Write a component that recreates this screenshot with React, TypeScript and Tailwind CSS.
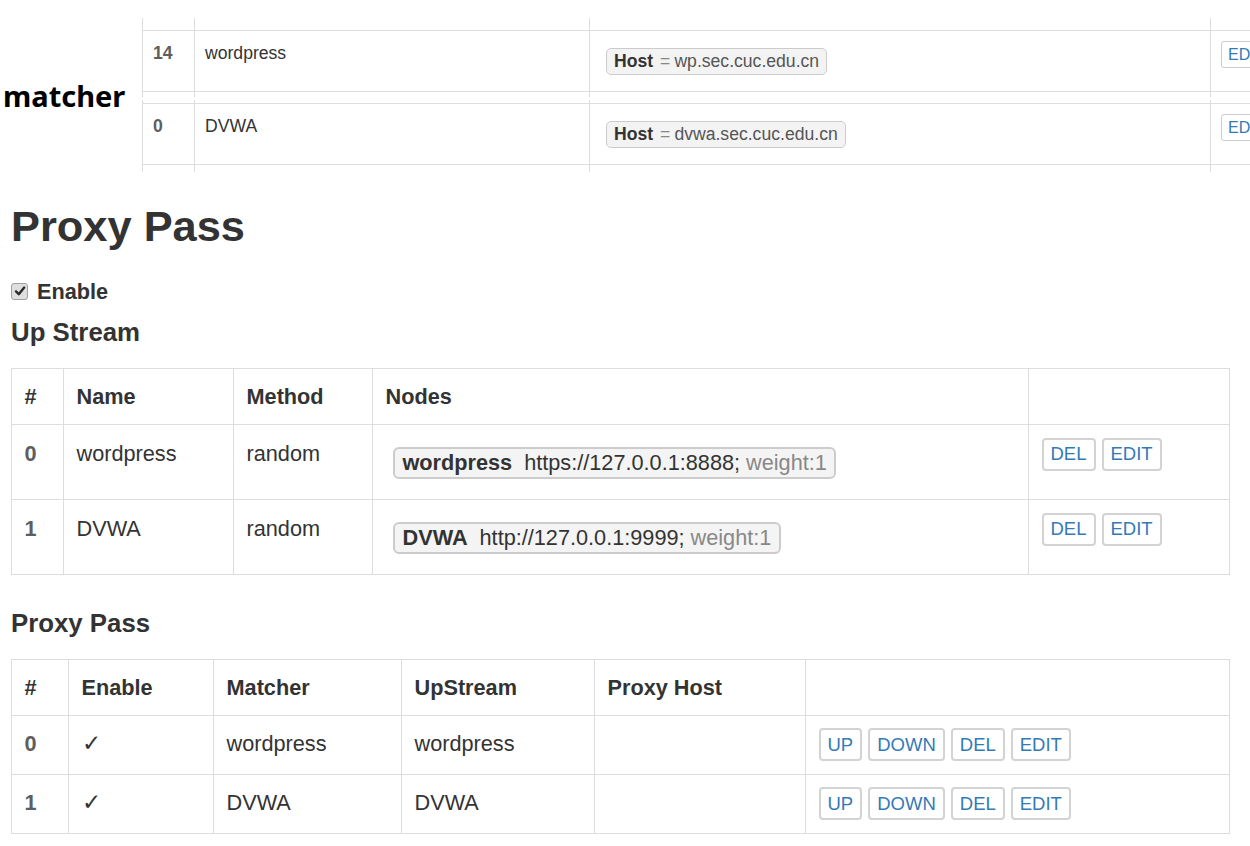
const upstreams = [
  { id: "0", name: "wordpress", method: "random", url: "https://127.0.0.1:8888;", weight: "weight:1" },
  { id: "1", name: "DVWA", method: "random", url: "http://127.0.0.1:9999;", weight: "weight:1" },
];

const passes = [
  { id: "0", matcher: "wordpress", upstream: "wordpress" },
  { id: "1", matcher: "DVWA", upstream: "DVWA" },
];

const matchers = [
  { id: "14", name: "wordpress", host: "wp.sec.cuc.edu.cn", pt: "pt-[12px]", pb: "pb-[5px]" },
  { id: "0", name: "DVWA", host: "dvwa.sec.cuc.edu.cn", pt: "pt-[3px]", pb: "pb-[7px]" },
];

function Btn({ label }: { label: string }) {
  return (
    <button className="mr-[6px] h-[33px] rounded-[4px] border-2 border-[#d3d3d3] bg-white px-[7px] text-[18.5px] leading-none text-[#337ab7]">
      {label}
    </button>
  );
}

function MatcherRow({ m }: { m: (typeof matchers)[number] }) {
  const cell = `shrink-0 border-l border-[#ddd] ${m.pt} ${m.pb}`;
  const inner = "h-[62px] border-y border-[#ddd] px-[10px] pt-[10px]";
  return (
    <div className="flex">
      <div className={`${cell} w-[52px]`}>
        <div className={`${inner} font-bold text-[#5e5e5e]`}>{m.id}</div>
      </div>
      <div className={`${cell} w-[395px]`}>
        <div className={inner}>{m.name}</div>
      </div>
      <div className={`${cell} w-[621px]`}>
        <div className={inner}>
          <span className="ml-[6px] mt-[7px] inline-flex h-[27px] items-center rounded-[5px] border border-[#ccc] bg-[#f3f3f3] px-[7px]">
            <b className="text-[#333]">Host</b>
            <span className="ml-[7px] text-[#888]">=</span>
            <span className="ml-[4px] text-[#555]">{m.host}</span>
          </span>
        </div>
      </div>
      <div className={`${cell} w-[80px]`}>
        <div className={`${inner} pt-[10px]`}>
          <span className="inline-flex h-[27px] items-center rounded-[3px] border border-[#ccc] bg-white px-[6px] text-[16px] text-[#337ab7]">
            EDIT
          </span>
        </div>
      </div>
    </div>
  );
}

export default function App() {
  const th = "border border-[#ddd] px-[12.5px] pt-[12px] text-left align-top font-bold";
  const td = "border border-[#ddd] px-[12.5px] pt-[12.5px] align-top";
  return (
    <div className="h-[846px] w-[1250px] overflow-hidden bg-white font-['Liberation_Sans',Arial,sans-serif] text-[#333]">
      <div className="mt-[18px] flex">
        <div className="flex w-[142px] shrink-0 items-center pl-[3px]">
          <h2 className="font-['Noto_Sans',sans-serif] text-[29px] leading-[37px] font-bold text-black">matcher</h2>
        </div>
        <div className="flex flex-col gap-[3px] text-[17.6px] leading-[25px]">
          {matchers.map((m) => (
            <MatcherRow key={m.id + m.name} m={m} />
          ))}
        </div>
      </div>

      <div className="pl-[11px] pr-[20px]">
        <h1 className="mt-[31px] text-[43.4px] leading-[47.7px] font-bold">Proxy Pass</h1>

        <label className="mt-[25px] flex h-[31px] items-center text-[21.7px] leading-[31px] font-bold">
          <span className="flex h-[17px] w-[17px] items-center justify-center rounded-[3px] border border-[#a0a0a0] bg-[#dedede]">
            <svg viewBox="0 0 12 12" className="h-[12px] w-[12px]">
              <path d="M2 6.4 L4.8 9.2 L10.2 2.6" fill="none" stroke="#2a2a2a" strokeWidth="2.4" strokeLinecap="round" strokeLinejoin="round" />
            </svg>
          </span>
          <span className="ml-[9px]">Enable</span>
        </label>

        <h3 className="mt-[11.6px] text-[25.8px] leading-[28.4px] font-bold">Up Stream</h3>

        <table className="mt-[21.7px] w-[1218px] table-fixed border-collapse text-[21.7px] leading-[31px]">
          <colgroup>
            <col className="w-[52px]" />
            <col className="w-[170px]" />
            <col className="w-[139px]" />
            <col className="w-[656px]" />
            <col className="w-[201px]" />
          </colgroup>
          <thead>
            <tr className="h-[56px]">
              <th className={th}>#</th>
              <th className={th}>Name</th>
              <th className={th}>Method</th>
              <th className={th}>Nodes</th>
              <th className={th}></th>
            </tr>
          </thead>
          <tbody>
            {upstreams.map((u) => (
              <tr key={u.id} className="h-[75px]">
                <td className={`${td} font-bold text-[#5e5e5e]`}>{u.id}</td>
                <td className={td}>{u.name}</td>
                <td className={td}>{u.method}</td>
                <td className={td}>
                  <span className="ml-[7.5px] mt-[9px] inline-flex h-[32px] items-center rounded-[6px] border-2 border-[#ccc] bg-[#f4f4f4] px-[7.5px]">
                    <b>{u.name}</b>
                    <span className="ml-[12px]">{u.url}</span>
                    <span className="ml-[6px] text-[#888]">{u.weight}</span>
                  </span>
                </td>
                <td className={td}>
                  <div className="flex">
                    <Btn label="DEL" />
                    <Btn label="EDIT" />
                  </div>
                </td>
              </tr>
            ))}
          </tbody>
        </table>

        <h3 className="mt-[34px] text-[25.8px] leading-[28.4px] font-bold">Proxy Pass</h3>

        <table className="mt-[21px] w-[1218px] table-fixed border-collapse text-[21.7px] leading-[31px]">
          <colgroup>
            <col className="w-[57px]" />
            <col className="w-[145px]" />
            <col className="w-[188px]" />
            <col className="w-[193px]" />
            <col className="w-[211px]" />
            <col className="w-[424px]" />
          </colgroup>
          <thead>
            <tr className="h-[56px]">
              <th className={th}>#</th>
              <th className={th}>Enable</th>
              <th className={th}>Matcher</th>
              <th className={th}>UpStream</th>
              <th className={th}>Proxy Host</th>
              <th className={th}></th>
            </tr>
          </thead>
          <tbody>
            {passes.map((p) => (
              <tr key={p.id} className="h-[59px]">
                <td className={`${td} font-bold text-[#5e5e5e]`}>{p.id}</td>
                <td className={`${td} font-['DejaVu_Sans',sans-serif] text-[23px] font-light`}>✓</td>
                <td className={td}>{p.matcher}</td>
                <td className={td}>{p.upstream}</td>
                <td className={td}></td>
                <td className={td}>
                  <div className="flex">
                    <Btn label="UP" />
                    <Btn label="DOWN" />
                    <Btn label="DEL" />
                    <Btn label="EDIT" />
                  </div>
                </td>
              </tr>
            ))}
          </tbody>
        </table>
      </div>
    </div>
  );
}
